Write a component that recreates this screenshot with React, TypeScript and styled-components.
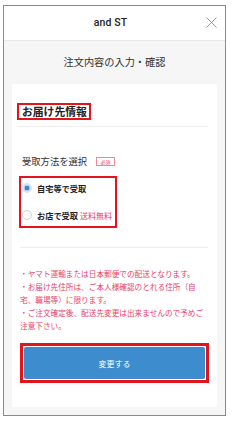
import React from "react";
import styled, { createGlobalStyle } from "styled-components";

const GlobalStyle = createGlobalStyle`
  html, body { margin: 0; padding: 0; background: #ffffff; }
  body { font-family: "Noto Sans CJK JP", "Noto Sans", sans-serif; color: #333; }
  * { box-sizing: border-box; }
`;

const ANNOT = "#e3141c";
const NOTE = "#e8416a";

const Frame = styled.div`
  margin: 5px 0 0 3px;
  width: 223px;
  height: 411px;
  border: 1px solid #8a8a8a;
  background: #f6f6f6;
  display: flex;
  flex-direction: column;
`;

const Header = styled.header`
  height: 35px;
  flex: none;
  background: #fff;
  border-bottom: 1px solid #e6e6e6;
  display: grid;
  grid-template-columns: 1fr auto 1fr;
  align-items: center;
  padding: 0 8px 1px 0;
`;

const Brand = styled.div`
  grid-column: 2;
  font-family: Roboto, "Liberation Sans", sans-serif;
  font-weight: 500;
  font-size: 10.5px;
  color: #222;
  letter-spacing: 0.1px;
`;

const Close = styled.button`
  grid-column: 3;
  justify-self: end;
  width: 12px;
  height: 12px;
  padding: 0;
  border: 0;
  background: none;
  display: flex;
  align-items: center;
  justify-content: center;
`;

const PageTitle = styled.h1`
  margin: 0;
  padding: 14px 0 15px;
  text-align: center;
  font-size: 10.2px;
  line-height: 14px;
  font-weight: 400;
  color: #333;
`;

const Card = styled.section`
  margin: 0 8px 8px;
  background: #fff;
  border-radius: 2px;
  padding: 19px 9px 24px 5px;
  display: flex;
  flex-direction: column;
  align-items: flex-start;
`;

const SectionTitle = styled.h2`
  margin: 0;
  border: 2px solid ${ANNOT};
  padding: 0 2px 0 3px;
  font-size: 10.8px;
  line-height: 13px;
  font-weight: 700;
  color: #222;
  white-space: nowrap;
`;

const Divider = styled.hr<{ $top: number; $left?: number }>`
  align-self: stretch;
  margin: ${(p) => p.$top}px 0 0 ${(p) => p.$left ?? 0}px;
  border: 0;
  height: 1px;
  background: #eeeeee;
`;

const LabelRow = styled.div`
  margin-top: 28px;
  padding-left: 5px;
  display: flex;
  align-items: center;
  gap: 9px;
  height: 12px;
`;

const Label = styled.span`
  font-size: 9.3px;
  line-height: 12px;
  color: #333;
  white-space: nowrap;
`;

const Badge = styled.span`
  width: 19px;
  height: 9px;
  border: 1px solid #ec8a9a;
  color: #e0506a;
  font-size: 5px;
  line-height: 7px;
  display: flex;
  align-items: center;
  justify-content: center;
  margin-top: 1px;
`;

const OptionBox = styled.div`
  margin: 9px 0 0 2px;
  width: 98px;
  height: 52px;
  border: 2px solid ${ANNOT};
  padding: 0 0 1px 1px;
  display: flex;
  flex-direction: column;
  gap: 7px;
`;

const Option = styled.label`
  height: 20px;
  display: flex;
  align-items: center;
  gap: 5px;
  white-space: nowrap;
`;

const Radio = styled.span<{ $checked?: boolean }>`
  width: 10px;
  height: 10px;
  border-radius: 50%;
  flex: none;
  border: ${(p) => (p.$checked ? "2px solid #d9e4f1" : "1px solid #d2d2d2")};
  background: ${(p) => (p.$checked ? "#3d83d6" : "#fafafa")};
  box-shadow: ${(p) => (p.$checked ? "inset 0 0 0 0.5px #fff" : "none")};
`;

const OptionText = styled.span`
  font-size: 8.2px;
  font-weight: 700;
  color: #222;
`;

const Free = styled.span`
  font-size: 8px;
  font-weight: 400;
  color: ${NOTE};
  margin-left: 2px;
`;

const Notes = styled.div`
  margin-top: 18.5px;
  padding-left: 3px;
  font-size: 7.65px;
  line-height: 13px;
  color: ${NOTE};
  white-space: nowrap;
`;

const NoteLine = styled.div``;

const ButtonFrame = styled.div`
  margin: 11.5px 0 0 3px;
  width: 189px;
  height: 40px;
  border: 3px solid ${ANNOT};
  padding: 1px;
  background: #fff;
`;

const PrimaryButton = styled.button`
  width: 100%;
  height: 100%;
  border: 0;
  border-radius: 2px;
  background: #3d8ccd;
  color: #fff;
  font-family: "Noto Sans CJK JP", sans-serif;
  font-size: 8px;
  padding: 0;
`;

export default function App() {
  return (
    <>
      <GlobalStyle />
      <Frame>
        <Header>
          <Brand>and ST</Brand>
          <Close aria-label="close">
            <svg width="11" height="11" viewBox="0 0 11 11">
              <path d="M0.5 0.5 L10.5 10.5 M10.5 0.5 L0.5 10.5" stroke="#9a9a9a" strokeWidth="1" fill="none" />
            </svg>
          </Close>
        </Header>
        <PageTitle>注文内容の入力・確認</PageTitle>
        <Card>
          <SectionTitle>お届け先情報</SectionTitle>
          <Divider $top={6} />
          <LabelRow>
            <Label>受取方法を選択</Label>
            <Badge>必須</Badge>
          </LabelRow>
          <OptionBox>
            <Option>
              <Radio $checked />
              <OptionText>自宅等で受取</OptionText>
            </Option>
            <Option>
              <Radio />
              <OptionText>
                お店で受取<Free>送料無料</Free>
              </OptionText>
            </Option>
          </OptionBox>
          <Divider $top={19} $left={3} />
          <Notes>
            <NoteLine>・ヤマト運輸または日本郵便での配送となります。</NoteLine>
            <NoteLine>・お届け先住所は、ご本人様確認のとれる住所（自</NoteLine>
            <NoteLine>宅、職場等）に限ります。</NoteLine>
            <NoteLine>・ご注文確定後、配送先変更は出来ませんので予めご</NoteLine>
            <NoteLine>注意下さい。</NoteLine>
          </Notes>
          <ButtonFrame>
            <PrimaryButton>変更する</PrimaryButton>
          </ButtonFrame>
        </Card>
      </Frame>
    </>
  );
}
